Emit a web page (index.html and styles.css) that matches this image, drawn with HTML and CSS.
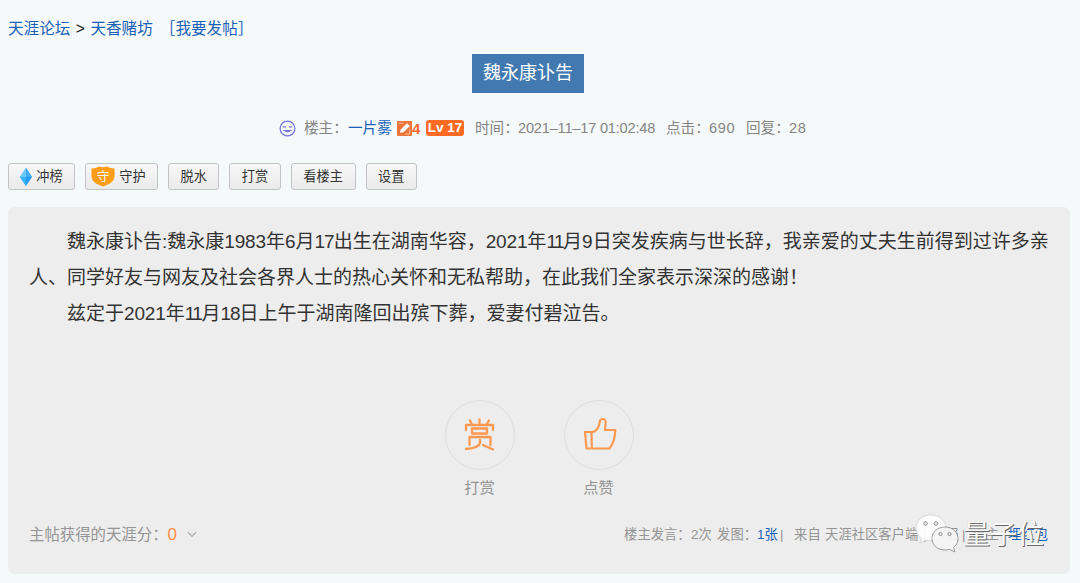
FILE: index.html
```html
<!DOCTYPE html>
<html lang="zh-CN">
<head>
<meta charset="utf-8">
<title>魏永康讣告</title>
<link rel="stylesheet" href="styles.css">
</head>
<body>
<nav class="crumbs"><a>天涯论坛</a><span class="sep">&gt;</span><a>天香赌坊</a><a class="post">［我要发帖］</a></nav>
<h1 class="title"><span>魏永康讣告</span></h1>
<div class="meta">
  <svg class="face" width="17" height="17" viewBox="0 0 17 17" fill="none" stroke="#7375df" stroke-width="1.25"><circle cx="8.5" cy="8.5" r="7.4"/><path d="M3.700 6.900h3.400M9.900 6.900h3.400M5.500 10.600h6q-3 2.200-6 0z"/></svg>
  <span class="m-label">楼主：</span><a class="m-name">一片雾</a>
  <svg class="pen" width="15" height="15" viewBox="0 0 15 15"><rect width="15" height="15" rx="1" fill="#ed7439"/><path d="M3 12l.8-3.500L10 2.300l3 2.600-6.300 6.200z" fill="#fff"/><path d="M1.500 2.200h5M12.800 8v5H8" stroke="#ffc39c" fill="none"/></svg>
  <b class="four">4</b><b class="lv">Lv 17</b>
  <span class="m-time">时间：</span><span class="m-date">2021–11–17 01:02:48</span>
  <span class="m-click">点击：</span><span class="m-num">690</span>
  <span class="m-reply">回复：</span><span class="m-count">28</span>
</div>
<div class="tools">
  <button class="rush"><svg width="12" height="18" viewBox="0 0 12 18"><path d="M6 0l6 9-6 9-6-9z" fill="#249cf4"/><path d="M6 0v9L0 9z" fill="#6bc8ff"/><path d="M6 0l6 9H6z" fill="#3eacfa"/><path d="M0 9h6v9z" fill="#35b4ff"/></svg><span>冲榜</span></button>
  <button class="guard"><svg width="24" height="21" viewBox="0 0 24 21"><path d="M.5 2.500q4.500 0 7.500-2 4 1.500 8 0 3 2 7.500 2v7.500c0 6-6 8.500-11.500 10.500C6.500 18.500.5 16 .5 10z" fill="#ff9d16"/><text x="12" y="15" text-anchor="middle" font-size="12.500">守</text></svg><span>守护</span></button>
  <button class="two"><span>脱水</span></button>
  <button class="two"><span>打赏</span></button>
  <button class="three"><span>看楼主</span></button>
  <button class="two"><span>设置</span></button>
</div>
<main class="panel">
  <div class="article">
    <p class="line first">魏永康讣告:魏永康<i>1983</i>年6月<i class="tight">17</i>出生在湖南华容，<i>2021</i>年<i class="ones">11</i>月9日突发疾病与世长辞，我亲爱的丈夫生前得到过许多亲</p>
    <p class="line second">人、同学好友与网友及社会各界人士的热心关怀和无私帮助，在此我们全家表示深深的感谢！</p>
    <p class="line third">兹定于<i>2021</i>年<i class="ones">11</i>月<i class="tight">18</i>日上午于湖南隆回出殡下葬，爱妻付碧泣告。</p>
  </div>
  <div class="actions">
    <div class="action"><div class="ring"><svg width="32" height="34" viewBox="0 0 32 34" fill="none" stroke="#ff9850" stroke-width="2.300" stroke-linecap="round" stroke-linejoin="round"><path d="M15.500 1.500v5M6 2.500l2 4M25 2.500l-2.500 4M2 12V7h27v5M8 10.500h15v5H8zM5.500 27v-8h21v8M16 22v3q-1 5-14 6M19 27l10 4.500"/></svg></div><span>打赏</span></div>
    <div class="action"><div class="ring"><svg class="thumb" width="34" height="34" viewBox="0 0 34 34" fill="none" stroke="#ff9850" stroke-width="2.200" stroke-linejoin="round"><path d="M2 15h8c4-1 6-5 7-11q.4-2 2.500-2c3 0 3.500 2 3 5l-.5 6h10.300q-.4 12-5.800 18.500H3.500zM8.500 15.300l.3 16"/></svg></div><span>点赞</span></div>
  </div>
  <footer class="foot">
    <div class="score">主帖获得的天涯分：<b>0</b><svg width="10" height="7" viewBox="0 0 10 7" fill="none" stroke="#b4b4b4" stroke-width="1.600"><path d="M1 1.200l4 4 4-4"/></svg></div>
    <div class="info"><span class="f-speak">楼主发言：</span><span class="f-times">2次</span><span class="f-pic">发图：</span><a class="f-one">1张</a><span class="f-bar">|</span><span class="f-from">来自</span><span class="f-client">天涯社区客户端</span><span class="f-bar2">|</span><span class="f-report">举报</span><span class="f-bar3">|</span><span class="f-owner">楼主</span><span class="f-bar4">|</span><a>埋红包</a></div>
  </footer>
</main>
<div class="mark">
  <svg width="44" height="40" viewBox="0 0 44 40"><g stroke="#a5a5a5" stroke-width=".7"><path d="M16 1C7.500 1 1 6.500 1 14c0 4 2 7.500 5.500 10L5 29l6-3q2.500.7 5 .7C24.500 26.700 31 21 31 14S24.500 1 16 1z" fill="#fff" fill-opacity=".93" stroke="#ccc"/><path d="M30 13c-7.500 0-13 5-13 11.500S22.500 36 30 36q2.500 0 4.500-.7L40 38l-1.500-4.500C41.500 31.300 43 28 43 24.500 43 18 37.500 13 30 13z" fill="#f5f5f5" fill-opacity=".94" stroke="#777"/></g><g fill="#eee" stroke="#8c8c8c"><circle cx="10.500" cy="9.500" r="1.800"/><circle cx="21" cy="9.500" r="1.800"/><circle cx="25.500" cy="20" r="1.600"/><circle cx="34.500" cy="20" r="1.600"/></g></svg>
  <span>量子位</span>
</div>
</body>
</html>
```
FILE: styles.css
```css
* { box-sizing: border-box; }
body { margin: 0; width: 1080px; height: 583px; overflow: hidden; background: #f5f9fa; color: #333; font-family: "Liberation Sans", "Noto Sans CJK SC", sans-serif; }
a { color: #1a62b8; }
i { font-style: normal; letter-spacing: -.15px; }
.tight { letter-spacing: -1px; }
.ones { letter-spacing: -1.500px; }
.crumbs { display: flex; align-items: center; height: 56px; padding: 0 0 2px 8px; font-size: 15.600px; white-space: nowrap; }
.sep { width: 20px; padding-top: 3px; text-align: center; color: #111; }
.post { margin-left: 7px; }
.title { display: flex; margin: -2px 0 0 472px; font-size: 18px; font-weight: 400; }
.title span { width: 112px; height: 39px; line-height: 39px; text-align: center; background: #4279b1; color: #fff; }
.meta { display: flex; align-items: center; height: 30px; margin-top: 20px; padding-left: 279px; font-size: 14.600px; color: #858585; white-space: nowrap; }
.meta > * { flex: none; }
.m-label, .m-name, .m-time, .m-click, .m-reply { padding-bottom: 3px; }
.m-label { width: 44px; margin-left: 8px; }
.m-name { width: 49px; }
.four { width: 10px; font-size: 15px; line-height: 16px; color: #f26b2c; padding-top: 2px; }
.lv { width: 38px; height: 16px; margin-left: 4px; border-radius: 3px; background: #ff6b24; color: #fff; font-size: 13.500px; line-height: 16px; text-align: center; }
.m-time { width: 43px; margin-left: 11px; }
.m-date { width: 148px; letter-spacing: -.2px; }
.m-click { width: 43px; }
.m-num { width: 37px; letter-spacing: .6px; }
.m-reply { width: 43px; }
.m-count { letter-spacing: .6px; }
.tools { display: flex; gap: 10px; height: 28px; margin: 20px 0 0 8px; }
button { display: flex; align-items: center; justify-content: center; height: 27px; padding: 0; border: 1px solid #c3c3c3; border-radius: 3px; background: linear-gradient(#f8f8f8, #eaeaea); color: #333; font: 13.200px "Liberation Sans", "Noto Sans CJK SC", sans-serif; }
button span { padding-bottom: 2px; }
.rush { width: 67px; gap: 4px; }
.guard { width: 73px; gap: 4px; padding-right: 6px; }
.guard text { fill: #fff; }
.two { width: 51.300px; }
.three { width: 65px; }
.panel { width: 1062px; height: 367px; margin: 16px 0 0 8px; padding-top: 17px; border-radius: 7px; background: #ededed; }
.article { height: 159px; padding-left: 21px; color: #333; font-size: 19px; white-space: nowrap; }
.line { margin: 0; line-height: 36px; }
.first, .third { padding-left: 38px; }
.actions { display: flex; gap: 49px; height: 118px; margin: 17px 0 0; padding-left: 436.500px; }
.action { width: 70px; text-align: center; font-size: 15.300px; line-height: 36px; color: #949494; }
.ring { display: flex; align-items: center; justify-content: center; width: 70px; height: 70px; border: 1px solid #dedede; border-radius: 50%; }
.thumb { margin: -2px 0 0 2px; }
.foot { display: flex; justify-content: space-between; height: 33px; padding: 0 22px 0 21px; line-height: 33px; color: #949494; }
.score { display: flex; align-items: center; font-size: 15.400px; }
.score b { width: 19px; font-weight: 400; font-size: 17px; color: #ff9046; }
.info { display: flex; font-size: 13.300px; white-space: nowrap; }
.info span, .info a { flex: none; }
.f-speak { width: 67px; }
.f-times { width: 26px; }
.f-pic { width: 40px; }
.f-one { width: 23px; }
.f-bar { width: 14px; }
.f-from { width: 31px; }
.f-client { width: 98px; }
.f-bar2 { width: 9px; }
.f-report { width: 30px; }
.f-bar3 { width: 10px; }
.f-owner { width: 29px; }
.f-bar4 { width: 7px; }
.mark { position: absolute; left: 915px; top: 514px; display: flex; }
.mark span { margin-left: 4px; font-size: 27px; line-height: 42px; color: #fafafa; text-shadow: 1px 1px 0 #686868, -.5px -.5px 0 #ddd; }
```
